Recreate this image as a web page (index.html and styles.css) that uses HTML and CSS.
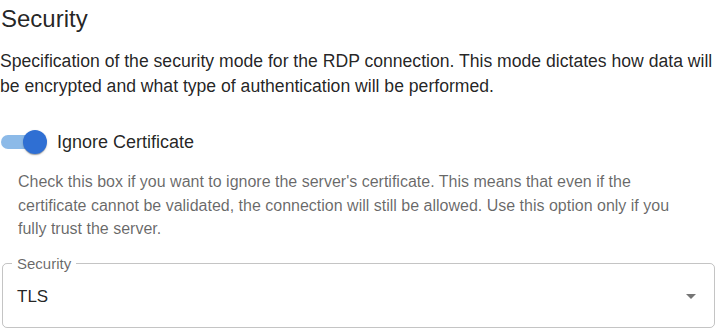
FILE: index.html
```html
<!DOCTYPE html>
<html lang="en">
<head>
  <meta charset="UTF-8">
  <title>Security</title>
  <link rel="stylesheet" href="styles.css">
</head>
<body>
  <div class="section">
    <h2 class="title">Security</h2>
    <p class="description">Specification of the security mode for the RDP connection. This mode dictates how data will be encrypted and what type of authentication will be performed.</p>

    <label class="switch-row">
      <span class="switch">
        <span class="switch-track"></span>
        <span class="switch-thumb"></span>
      </span>
      <span class="switch-label">Ignore Certificate</span>
    </label>
    <p class="helper">Check this box if you want to ignore the server's certificate. This means that even if the certificate cannot be validated, the connection will still be allowed. Use this option only if you fully trust the server.</p>

    <div class="select-field">
      <fieldset class="select-outline">
        <legend class="select-legend">Security</legend>
      </fieldset>
      <div class="select-value">TLS</div>
      <svg class="select-arrow" viewBox="0 0 24 24" width="24" height="24"><path d="M7 10l5 5 5-5z"/></svg>
    </div>
  </div>
</body>
</html>
```

FILE: styles.css
```css
* {
  box-sizing: border-box;
}

body {
  margin: 0;
  font-family: "Liberation Sans", Arial, sans-serif;
  color: rgba(0, 0, 0, 0.87);
  background: #fff;
}

.title {
  margin: 4px 0 0 1px;
  font-size: 24px;
  font-weight: 400;
  line-height: 29px;
}

.description {
  margin: 16px 0 0;
  font-size: 17.6px;
  line-height: 25px;
}

.switch-row {
  display: flex;
  align-items: center;
  margin-top: 24px;
  height: 38px;
}

.switch {
  position: relative;
  width: 48px;
  height: 24px;
  flex-shrink: 0;
}

.switch-track {
  position: absolute;
  left: 1px;
  top: 5px;
  width: 40px;
  height: 14px;
  border-radius: 7px;
  background: #1976d2;
  opacity: 0.5;
}

.switch-thumb {
  position: absolute;
  left: 23px;
  top: 0;
  width: 24px;
  height: 24px;
  border-radius: 50%;
  background: #2f6fd3;
  box-shadow: 0 2px 1px -1px rgba(0,0,0,0.2), 0 1px 1px 0 rgba(0,0,0,0.14), 0 1px 3px 0 rgba(0,0,0,0.12);
}

.switch-label {
  margin-left: 9px;
  font-size: 18px;
}

.helper {
  margin: 9px 28px 0 18px;
  font-size: 16px;
  line-height: 23.5px;
  color: rgba(0, 0, 0, 0.6);
}

.select-field {
  position: relative;
  display: flex;
  align-items: center;
  margin: 23px 0 0 2px;
  width: 713px;
  height: 64px;
}

.select-outline {
  position: absolute;
  top: -8px;
  left: 0;
  right: 0;
  bottom: 0;
  margin: 0;
  padding: 0 9px;
  border: 1px solid rgba(0, 0, 0, 0.23);
  border-radius: 5px;
}

.select-legend {
  padding: 0 5px;
  font-size: 15px;
  line-height: 15px;
  color: rgba(0, 0, 0, 0.6);
}

.select-value {
  padding-left: 15px;
  font-size: 17px;
  flex: 1;
  margin-top: 2px;
}

.select-arrow {
  margin-right: 12px;
  fill: rgba(0, 0, 0, 0.54);
}
```
